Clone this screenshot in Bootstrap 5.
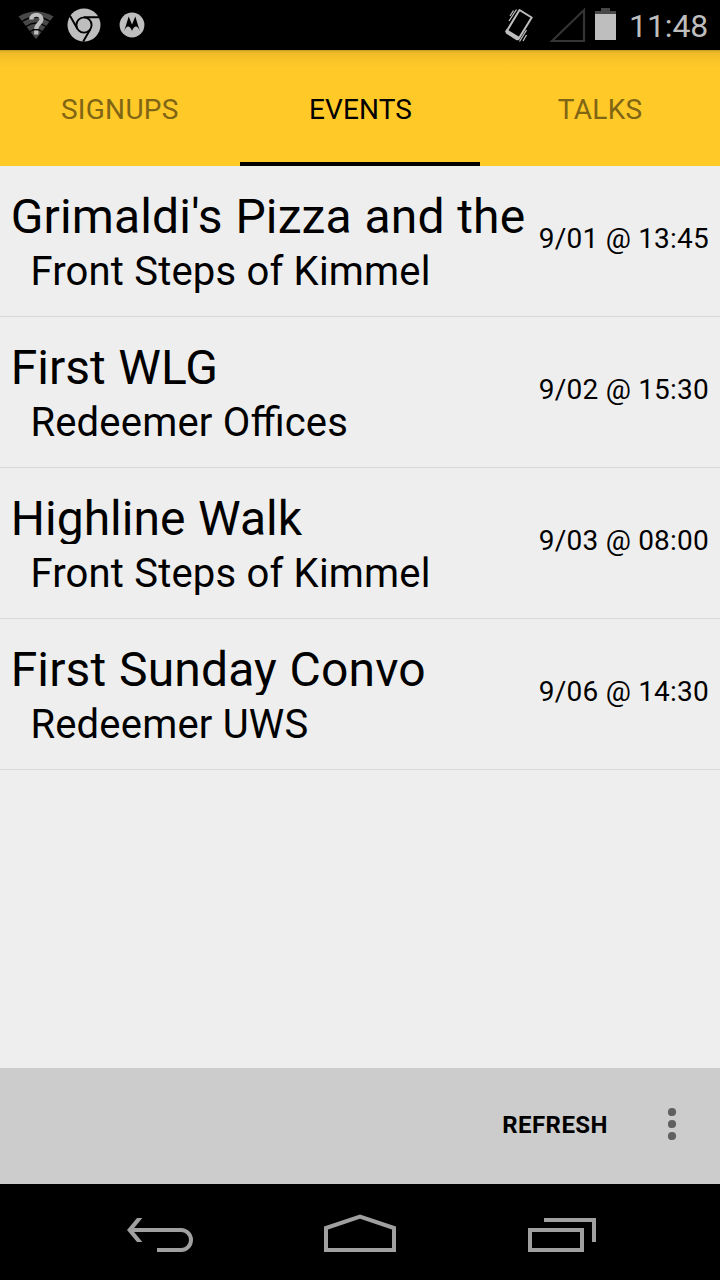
<!DOCTYPE html>
<html lang="en">
<head>
<meta charset="utf-8">
<meta name="viewport" content="width=device-width, initial-scale=1">
<title>Events</title>
<link href="https://cdn.jsdelivr.net/npm/bootstrap@5.3.0/dist/css/bootstrap.min.css" rel="stylesheet">
<style>
  body { font-family: Roboto, "Noto Sans", sans-serif; background: #eee; color: #000; height: 1280px; overflow: hidden; }
  .status-bar { height: 50px; background: #000; color: #bebebe; }
  .status-clock { width: 100px; padding-left: 9px; font-size: 32px; line-height: 52px; letter-spacing: -.1px; }
  .tab-strip { height: 116px; background: linear-gradient(#b78f20 0, #dcae25 1px, #eeba27 3px, #f9c428 10px, #ffc928 18px); }
  .tab-strip .nav-link { height: 116px; padding: 2px 0 0; border-radius: 0; border-bottom: 4px solid transparent; font-size: 28px; line-height: 116px; color: #806514; letter-spacing: .3px; }
  .tab-strip .nav-link.active { color: #000; border-color: #000; padding-left: 1px; letter-spacing: .1px; }
  .event-row { height: 151px; padding: 20px 11px 0 10.7px; border-bottom: 1px solid #d9d9d9; }
  .event-title { height: 56px; font-size: 48px; line-height: 61px; overflow: hidden; width: 516px; letter-spacing: .15px; word-spacing: .6px; }
  .title-snug { letter-spacing: .03px; }
  .event-place { font-size: 40px; line-height: 47px; padding-left: 19.7px; margin-top: 6px; letter-spacing: .19px; font-feature-settings: "liga" 1; }
  .event-time { font-size: 28px; line-height: 33px; margin-top: 36px; letter-spacing: .22px; }
  .action-bar { height: 116px; background: #ccc; }
  .refresh-btn { font-size: 24px; font-weight: 700; line-height: 28px; padding: 0 0 2px; border: 0; color: #000; margin-right: 60px; letter-spacing: .45px; }
  .system-nav { height: 96px; background: #000; }
</style>
</head>
<body class="d-flex flex-column">
<header class="status-bar d-flex flex-shrink-0">
  <svg width="160" height="50" viewBox="0 0 160 50">
    <path d="M18.500 16.500Q36 6.500 53.500 16.500L36 39Z" fill="#484848"/>
    <g fill="none" stroke="#000" stroke-width="1.300"><path d="M22 21.500Q36 12.500 50 21.500M26 26.500Q36 19.500 46 26.500M30 31.500Q36 27.500 42 31.500"/></g>
    <path d="M31.300 19.500C31.300 13.200 41.500 13.200 41.500 19.300C41.500 23.500 36.300 23.500 36.300 29" fill="none" stroke="#bebebe" stroke-width="4.200"/>
    <rect x="34.100" y="30.500" width="4.300" height="4" fill="#bebebe"/>
    <circle cx="84" cy="25" r="16.500" fill="#bebebe"/>
    <circle cx="84" cy="25" r="7.600" fill="#bebebe" stroke="#000" stroke-width="1.900"/>
    <path d="M84 17.300H99M77.500 29L70 15.800M90.500 29L83.200 41.500" fill="none" stroke="#000" stroke-width="1.900"/>
    <circle cx="132" cy="25" r="12.400" fill="#bebebe"/>
    <path d="M124 31.500L128.700 16.500L132 24.500L135.300 16.500L140 31.500Q138 26.500 136 26.500Q133.500 26.500 132 31Q130.500 26.500 128 26.500Q126 26.500 124 31.500Z" fill="#000"/>
  </svg>
  <svg class="ms-auto" width="120" height="50" viewBox="500 0 120 50">
    <path d="M519.500 10L531.700 17.500L518.500 39L506.500 31.500Z" fill="none" stroke="#bebebe" stroke-width="2" stroke-linejoin="round"/>
    <path d="M506.500 29L519.500 37L518.500 40.200L516.500 40.200L506 33.500L505.300 31.500Z" fill="#bebebe"/>
    <path d="M509 21L516.500 9.500M510 16L513.500 10.500M519.500 41.500L526.500 30M523 41L526.500 35" fill="none" stroke="#bebebe" stroke-width="1.300"/>
    <path d="M552 41L584 10V41Z" fill="none" stroke="#343434" stroke-width="2.200"/>
    <path d="M595 14V11H601V8H610V11H616V14Z" fill="#484848"/>
    <rect x="595" y="14" width="21" height="26" fill="#bebebe"/>
  </svg>
  <div class="status-clock text-nowrap">11:48</div>
</header>
<nav class="tab-strip nav nav-justified flex-shrink-0">
  <a class="nav-link col" href="#">SIGNUPS</a>
  <a class="nav-link col active" href="#">EVENTS</a>
  <a class="nav-link col" href="#">TALKS</a>
</nav>
<main class="flex-grow-1">
  <div class="event-row d-flex justify-content-between">
    <div><div class="event-title text-nowrap">Grimaldi's Pizza and the</div><div class="event-place text-nowrap">Front Steps of Kimmel</div></div>
    <div class="event-time text-nowrap">9/01 @ 13:45</div>
  </div>
  <div class="event-row d-flex justify-content-between">
    <div><div class="event-title title-snug text-nowrap">First WLG</div><div class="event-place text-nowrap">Redeemer Offices</div></div>
    <div class="event-time text-nowrap">9/02 @ 15:30</div>
  </div>
  <div class="event-row d-flex justify-content-between">
    <div><div class="event-title title-snug text-nowrap">Highline Walk</div><div class="event-place text-nowrap">Front Steps of Kimmel</div></div>
    <div class="event-time text-nowrap">9/03 @ 08:00</div>
  </div>
  <div class="event-row d-flex justify-content-between">
    <div><div class="event-title text-nowrap">First Sunday Convo</div><div class="event-place text-nowrap">Redeemer UWS</div></div>
    <div class="event-time text-nowrap">9/06 @ 14:30</div>
  </div>
</main>
<div class="action-bar d-flex align-items-center justify-content-end flex-shrink-0">
  <button class="btn refresh-btn">REFRESH</button>
  <svg width="52" height="40" viewBox="0 0 52 40" fill="#606060"><circle cx="4" cy="6" r="4.100"/><circle cx="4" cy="18" r="4.100"/><circle cx="4" cy="30" r="4.100"/></svg>
</div>
<footer class="system-nav flex-shrink-0">
  <svg class="d-block" width="720" height="96" viewBox="0 1184 720 96" fill="none" stroke="#a0a0a0" stroke-width="4">
    <path d="M130 1230H181A10 10 0 0 1 181 1250H157"/>
    <path d="M137 1218H142.300L132.500 1230L142.300 1242H137L127 1230Z" fill="#a0a0a0" stroke="none"/>
    <path d="M326 1250V1228L360 1216.500L394 1228V1250Z"/>
    <path d="M530 1230H582V1250H530ZM544 1220H594V1242"/>
  </svg>
</footer>
<script src="https://cdn.jsdelivr.net/npm/bootstrap@5.3.0/dist/js/bootstrap.bundle.min.js"></script>
</body>
</html>
